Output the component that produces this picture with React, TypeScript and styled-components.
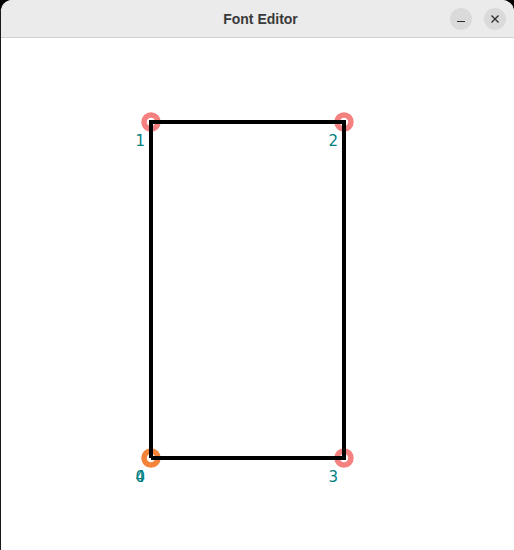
import React from "react";
import styled, {createGlobalStyle} from "styled-components";

const GlobalStyle = createGlobalStyle`
  html, body {
    margin: 0;
    padding: 0;
    background: #000;
  }
  #root {
    width: 514px;
    height: 550px;
  }
`

interface GlyphPoint {
    x: number,
    y: number,
    first?: boolean
}

// outline of the glyph in page pixels; the last point closes onto the first
const points: GlyphPoint[] = [
    {x: 150, y: 458, first: true},
    {x: 150, y: 122},
    {x: 343, y: 122},
    {x: 343, y: 458},
    {x: 150, y: 458},
]

const Window = styled.div`
  width: 514px;
  height: 550px;
  display: flex;
  flex-direction: column;
  background: #fff;
  border-radius: 12px 12px 0 0;
  border-left: 1px solid #1a1a1a;
  box-sizing: border-box;
  overflow: hidden;
`

const TitleBar = styled.div`
  height: 37px;
  flex: none;
  display: grid;
  grid-template-columns: 1fr auto 1fr;
  align-items: center;
  background: #ebebeb;
  border-bottom: 1px solid #d1d1d1;
  padding: 0 8px 0 12px;
`

const Title = styled.div`
  grid-column: 2;
  font-family: "Liberation Sans", Arial, sans-serif;
  font-weight: bold;
  font-size: 14px;
  color: #3a3a3a;
  padding-left: 2px;
`

const Controls = styled.div`
  grid-column: 3;
  justify-self: end;
  display: flex;
  gap: 12px;
`

const RoundButton = styled.button`
  width: 22px;
  height: 22px;
  border-radius: 50%;
  border: none;
  padding: 0;
  background: #dadada;
  display: flex;
  align-items: center;
  justify-content: center;
  color: #2e2e2e;
`

const Canvas = styled.svg`
  display: block;
  flex: 1;
  width: 100%;
`

const Label = styled.text`
  font-family: "DejaVu Sans", sans-serif;
  font-size: 15px;
  fill: #008080;
`

export default function App() {
    const outline = points.map(p => `${p.x},${p.y}`).join(" ")
    return <>
        <GlobalStyle/>
        <Window>
            <TitleBar>
                <Title>Font Editor</Title>
                <Controls>
                    <RoundButton aria-label="minimize">
                        <svg width="10" height="10" viewBox="0 0 10 10">
                            <line x1="1" y1="7.5" x2="9" y2="7.5" stroke="currentColor" strokeWidth="1.2"/>
                        </svg>
                    </RoundButton>
                    <RoundButton aria-label="close">
                        <svg width="10" height="10" viewBox="0 0 10 10">
                            <path d="M1.5 1.5 L8.5 8.5 M8.5 1.5 L1.5 8.5" stroke="currentColor" strokeWidth="1.3"/>
                        </svg>
                    </RoundButton>
                </Controls>
            </TitleBar>
            <Canvas viewBox="0 38 513 512">
                {points.slice(0, 4).map((p, i) =>
                    <circle key={i} cx={p.x} cy={p.y} r={7} fill="none"
                            stroke={p.first ? "#f5843a" : "#f58080"} strokeWidth={5.5}/>
                )}
                <polyline points={outline} fill="none" stroke="#000" strokeWidth={4}/>
                {points.map((p, i) =>
                    <Label key={i} x={p.x - 15.5} y={p.y + 24}>{i}</Label>
                )}
            </Canvas>
        </Window>
    </>
}
